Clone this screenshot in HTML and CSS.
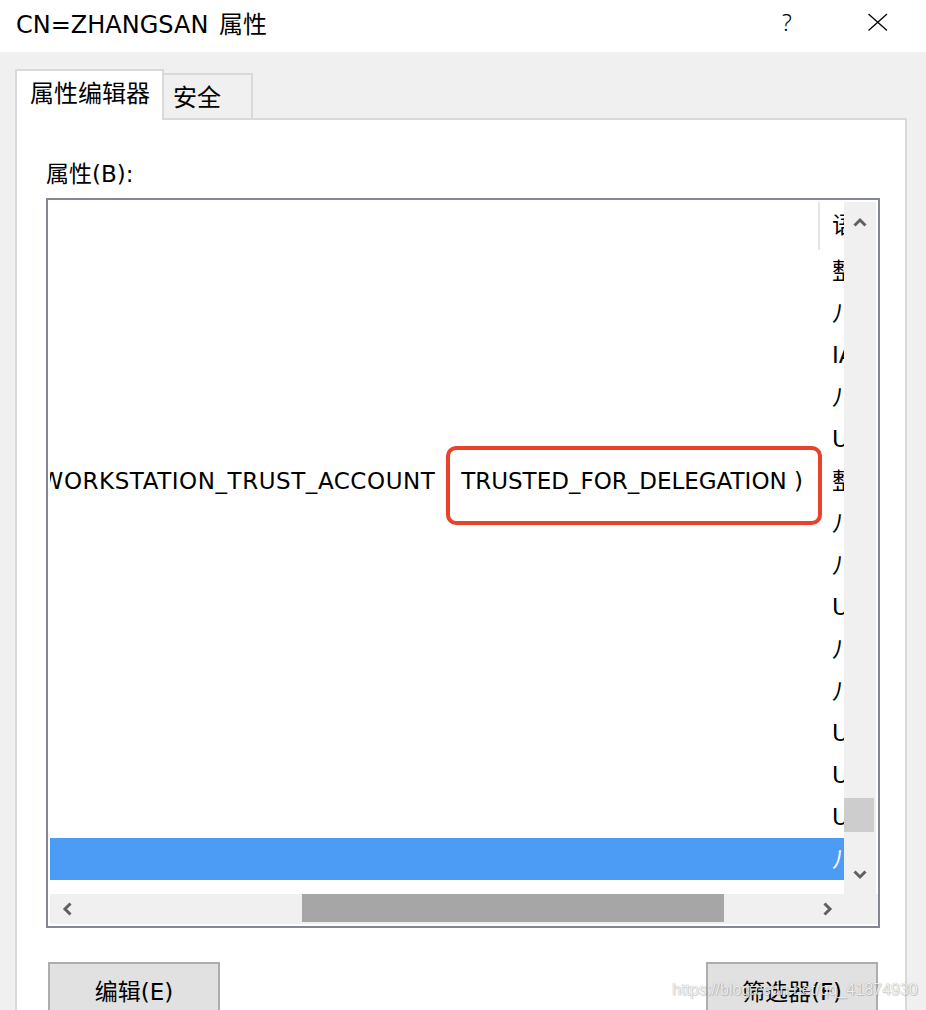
FILE: index.html
```html
<!DOCTYPE html>
<html lang="zh-CN">
<head>
<meta charset="utf-8">
<title>CN=ZHANGSAN 属性</title>
<link rel="stylesheet" href="styles.css">
</head>
<body>
<div class="window">
  <div class="titlebar">
    <div class="title">CN=ZHANGSAN 属性</div>
    <div class="help">?</div>
    <div class="close">
      <svg width="22" height="18" viewBox="0 0 22 18"><path d="M1.5 1 L20 17.5 M20 1 L1.5 17.5" stroke="#000" stroke-width="1.3" fill="none"/></svg>
    </div>
  </div>
  <div class="body">
    <div class="tabs">
      <div class="tab active">属性编辑器</div>
      <div class="tab">安全</div>
    </div>
    <div class="panel">
      <div class="label">属性(B):</div>
      <div class="listbox">
        <div class="listmain">
          <div class="listarea">
            <div class="row header">
              <div class="val"></div>
              <div class="sep"></div>
              <div class="syn">语法</div>
            </div>
            <div class="row"><div class="val"></div><div class="syn">整数</div></div>
            <div class="row"><div class="val"></div><div class="syn">八位字节字符串</div></div>
            <div class="row"><div class="val"></div><div class="syn">IA5 字符串</div></div>
            <div class="row"><div class="val"></div><div class="syn">八位字节字符串</div></div>
            <div class="row"><div class="val"></div><div class="syn">Unicode 字符串</div></div>
            <div class="row"><div class="val"><span class="vl">0x81000 = ( WORKSTATION_TRUST_ACCOUNT</span><span class="vbar">|</span><span>TRUSTED_FOR_DELEGATION )</span></div><div class="syn">整数</div></div>
            <div class="row"><div class="val"></div><div class="syn">八位字节字符串</div></div>
            <div class="row"><div class="val"></div><div class="syn">八位字节字符串</div></div>
            <div class="row"><div class="val"></div><div class="syn">Unicode 字符串</div></div>
            <div class="row"><div class="val"></div><div class="syn">八位字节字符串</div></div>
            <div class="row"><div class="val"></div><div class="syn">八位字节字符串</div></div>
            <div class="row"><div class="val"></div><div class="syn">Unicode 字符串</div></div>
            <div class="row"><div class="val"></div><div class="syn">Unicode 字符串</div></div>
            <div class="row"><div class="val"></div><div class="syn">Unicode 字符串</div></div>
            <div class="row selected"><div class="val"></div><div class="syn">八位字节字符串</div></div>
          </div>
          <div class="vscroll">
            <div class="sbtn vup"><svg width="14" height="10" viewBox="0 0 14 10"><polyline points="1.5,8.5 7,3 12.5,8.5" stroke="#606060" stroke-width="3" fill="none"/></svg></div>
            <div class="vtrack"><div class="vthumb"></div></div>
            <div class="sbtn vdown"><svg width="14" height="10" viewBox="0 0 14 10"><polyline points="1.5,1.5 7,7 12.5,1.5" stroke="#606060" stroke-width="3" fill="none"/></svg></div>
          </div>
        </div>
        <div class="hscroll">
          <div class="sbtn hleft"><svg width="10" height="14" viewBox="0 0 10 14"><polyline points="8.5,1.5 3,7 8.5,12.5" stroke="#606060" stroke-width="3" fill="none"/></svg></div>
          <div class="htrack"><div class="hthumb"></div></div>
          <div class="sbtn hright"><svg width="10" height="14" viewBox="0 0 10 14"><polyline points="1.5,1.5 7,7 1.5,12.5" stroke="#606060" stroke-width="3" fill="none"/></svg></div>
          <div class="corner"></div>
        </div>
      </div>
      <div class="buttons">
        <div class="btn">编辑(E)</div>
        <div class="btn">筛选器(F)</div>
      </div>
    </div>
  </div>
  <div class="highlight"></div>
  <div class="watermark">https://blog.csdn.net/qq_41874930</div>
</div>
</body>
</html>
```

FILE: styles.css
```css
html, body {
  margin: 0;
  padding: 0;
}
body {
  background: #f0f0f0;
  font-family: "DejaVu Sans", "Noto Sans CJK SC", sans-serif;
  color: #000;
  overflow: hidden;
}
.window {
  position: relative;
  width: 926px;
  height: 1010px;
  overflow: hidden;
}
.titlebar {
  height: 52px;
  background: #fff;
  display: flex;
  align-items: center;
}
.title {
  padding-left: 16px;
  font-size: 24px;
  word-spacing: 3px;
  flex: 1;
  padding-bottom: 8px;
}
.help {
  width: 20px;
  font-family: "Noto Sans", sans-serif;
  font-size: 23px;
  font-weight: 300;
  margin-right: 65px;
  padding-bottom: 8px;
}
.close {
  width: 22px;
  margin-right: 37px;
  display: flex;
  padding-bottom: 8px;
}
.body {
  padding-top: 17px;
}
.tabs {
  display: flex;
  align-items: flex-end;
  margin-left: 15px;
  height: 49px;
  position: relative;
  z-index: 2;
}
.tab {
  box-sizing: border-box;
  height: 45px;
  width: 89px;
  border: 2px solid #d9d9d9;
  border-bottom: none;
  border-left: none;
  background: #f0f0f0;
  font-size: 24px;
  line-height: 47px;
  padding-left: 9px;
}
.tab.active {
  height: 51px;
  width: 149px;
  border-left: 2px solid #d9d9d9;
  background: #fff;
  line-height: 46px;
  padding-left: 13px;
  margin-bottom: -2px;
}
.panel {
  box-sizing: border-box;
  margin-left: 15px;
  width: 892px;
  height: 900px;
  border: 2px solid #d9d9d9;
  background: #fff;
  padding: 39px 0 0 29px;
}
.label {
  font-size: 23px;
  line-height: 30px;
  margin-bottom: 9px;
}
.listbox {
  box-sizing: border-box;
  width: 834px;
  height: 730px;
  border: 2px solid #828790;
  padding: 2px 0 2px 2px;
  background: #fff;
}
.listmain {
  display: flex;
  height: 692px;
}
.listarea {
  width: 794px;
  overflow: hidden;
  font-size: 23px;
}
.row {
  display: flex;
  height: 42px;
  line-height: 42px;
  white-space: nowrap;
}
.row.header {
  height: 48px;
  line-height: 46px;
}
.val {
  flex: none;
  width: 753px;
  padding-right: 29px;
  overflow: hidden;
  display: flex;
  justify-content: flex-end;
}
.vl {
  flex: none;
  letter-spacing: 0.55px;
}
.vbar {
  flex: none;
  padding: 0 10px 0 8px;
}
.header .val {
  width: 768px;
  padding-right: 0;
}
.sep {
  width: 2px;
  height: 48px;
  background: #e5e5e5;
  margin-right: 12px;
  flex: none;
}
.syn {
  flex: none;
}
.row.selected {
  background: #4c9bf5;
  color: #fff;
}
.vscroll {
  width: 32px;
  background: #f0f0f0;
  display: flex;
  flex-direction: column;
}
.sbtn {
  display: flex;
  align-items: center;
  justify-content: center;
  flex: none;
}
.vup { height: 40px; }
.vdown { height: 39px; }
.vtrack {
  flex: 1;
  padding-top: 556px;
}
.vthumb {
  width: 30px;
  height: 34px;
  background: #cdcdcd;
}
.hscroll {
  display: flex;
  height: 30px;
  background: #f0f0f0;
}
.hleft { width: 34px; }
.hright { width: 36px; }
.htrack {
  flex: 1;
  padding-left: 218px;
}
.hthumb {
  width: 422px;
  height: 28px;
  background: #a6a6a6;
}
.corner {
  width: 32px;
  background: #f0f0f0;
}
.buttons {
  display: flex;
  justify-content: space-between;
  width: 830px;
  margin-left: 2px;
  margin-top: 34px;
}
.btn {
  box-sizing: border-box;
  width: 172px;
  height: 56px;
  background: #e1e1e1;
  border: 2px solid #adadad;
  display: flex;
  align-items: center;
  justify-content: center;
  font-size: 23px;
}
.highlight {
  position: absolute;
  left: 446px;
  top: 446px;
  width: 368px;
  height: 71px;
  border: 4px solid #e8412c;
  border-radius: 10px;
}
.watermark {
  position: absolute;
  left: 672px;
  top: 981px;
  font-family: "Liberation Sans", Arial, sans-serif;
  font-size: 16px;
  color: rgba(255, 255, 255, 0.85);
  text-shadow: 0 0 1px rgba(0, 0, 0, 0.35), 1px 1px 1px rgba(0, 0, 0, 0.15);
  white-space: nowrap;
}
```
